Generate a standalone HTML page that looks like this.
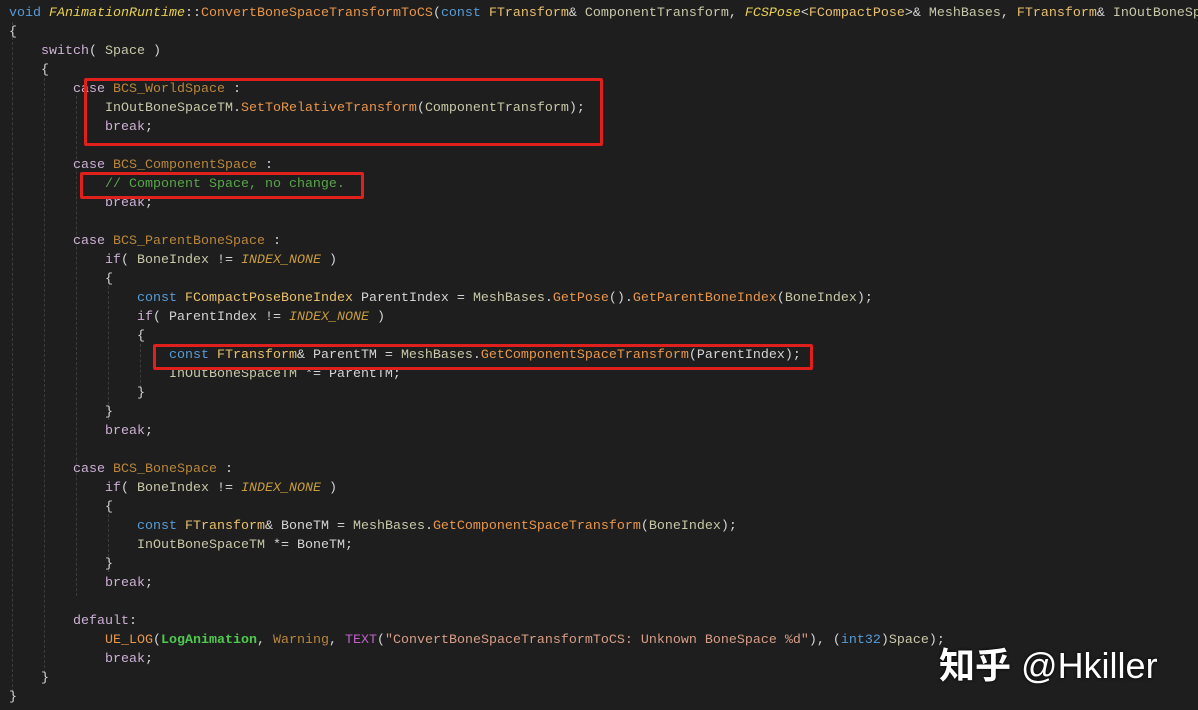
<!DOCTYPE html>
<html><head><meta charset="utf-8"><style>
html,body{margin:0;padding:0;background:#1e1e1e;width:1198px;height:710px;overflow:hidden}
pre{position:absolute;left:9px;top:4px;margin:0;font-family:"Liberation Mono",monospace;font-size:13.33px;line-height:19px;color:#d4d4d4;white-space:pre}
.k{color:#cdb0d6}.b{color:#569cd6}.t{color:#e8c06c}.ti{color:#e8d050;font-style:italic}.f{color:#e8964a}
.e{color:#b8863c}.m{color:#c89c3c;font-style:italic}.p{color:#c8c8a8}.c{color:#57a64a}.g{color:#4ec94e;font-weight:bold}
.s{color:#d69d85}.mac{color:#bd63c5}
.box{position:absolute;border:3px solid #e0201c;border-radius:2px}
.guide{position:absolute;width:0;border-left:1px dashed #3c3c3c}
.wm{position:absolute;left:939px;top:637px;color:#fff;font-family:"Liberation Sans","Noto Sans CJK SC",sans-serif;font-size:36px;white-space:nowrap;text-shadow:0 0 3px #000}
</style></head><body>
<div class="guide" style="left:12px;top:22px;height:670px"></div>
<div class="guide" style="left:44px;top:78px;height:595px"></div>
<div class="guide" style="left:76px;top:96px;height:500px"></div>
<div class="guide" style="left:108px;top:286px;height:134px"></div>
<div class="guide" style="left:140px;top:344px;height:44px"></div>
<div class="guide" style="left:108px;top:514px;height:58px"></div>
<pre><span class="b">void</span> <span class="ti">FAnimationRuntime</span>::<span class="f">ConvertBoneSpaceTransformToCS</span>(<span class="b">const</span> <span class="t">FTransform</span>&amp; <span class="p">ComponentTransform</span>, <span class="ti">FCSPose</span>&lt;<span class="t">FCompactPose</span>&gt;&amp; <span class="p">MeshBases</span>, <span class="t">FTransform</span>&amp; <span class="p">InOutBoneSpaceTM</span>
{
    <span class="k">switch</span>( <span class="p">Space</span> )
    {
        <span class="k">case</span> <span class="e">BCS_WorldSpace</span> :
            <span class="p">InOutBoneSpaceTM</span>.<span class="f">SetToRelativeTransform</span>(<span class="p">ComponentTransform</span>);
            <span class="k">break</span>;

        <span class="k">case</span> <span class="e">BCS_ComponentSpace</span> :
            <span class="c">// Component Space, no change.</span>
            <span class="k">break</span>;

        <span class="k">case</span> <span class="e">BCS_ParentBoneSpace</span> :
            <span class="k">if</span>( <span class="p">BoneIndex</span> != <span class="m">INDEX_NONE</span> )
            {
                <span class="b">const</span> <span class="t">FCompactPoseBoneIndex</span> ParentIndex = <span class="p">MeshBases</span>.<span class="f">GetPose</span>().<span class="f">GetParentBoneIndex</span>(<span class="p">BoneIndex</span>);
                <span class="k">if</span>( ParentIndex != <span class="m">INDEX_NONE</span> )
                {
                    <span class="b">const</span> <span class="t">FTransform</span>&amp; ParentTM = <span class="p">MeshBases</span>.<span class="f">GetComponentSpaceTransform</span>(ParentIndex);
                    <span class="p">InOutBoneSpaceTM</span> *= ParentTM;
                }
            }
            <span class="k">break</span>;

        <span class="k">case</span> <span class="e">BCS_BoneSpace</span> :
            <span class="k">if</span>( <span class="p">BoneIndex</span> != <span class="m">INDEX_NONE</span> )
            {
                <span class="b">const</span> <span class="t">FTransform</span>&amp; BoneTM = <span class="p">MeshBases</span>.<span class="f">GetComponentSpaceTransform</span>(<span class="p">BoneIndex</span>);
                <span class="p">InOutBoneSpaceTM</span> *= BoneTM;
            }
            <span class="k">break</span>;

        <span class="k">default</span>:
            <span class="f">UE_LOG</span>(<span class="g">LogAnimation</span>, <span class="e">Warning</span>, <span class="mac">TEXT</span>(<span class="s">"ConvertBoneSpaceTransformToCS: Unknown BoneSpace %d"</span>), (<span class="b">int32</span>)<span class="p">Space</span>);
            <span class="k">break</span>;
    }
}</pre>
<div class="box" style="left:84px;top:78px;width:513px;height:62px"></div>
<div class="box" style="left:80px;top:172px;width:278px;height:21px"></div>
<div class="box" style="left:153px;top:344px;width:654px;height:20px"></div>
<div class="wm"><b>知乎</b> @Hkiller</div>
</body></html>
